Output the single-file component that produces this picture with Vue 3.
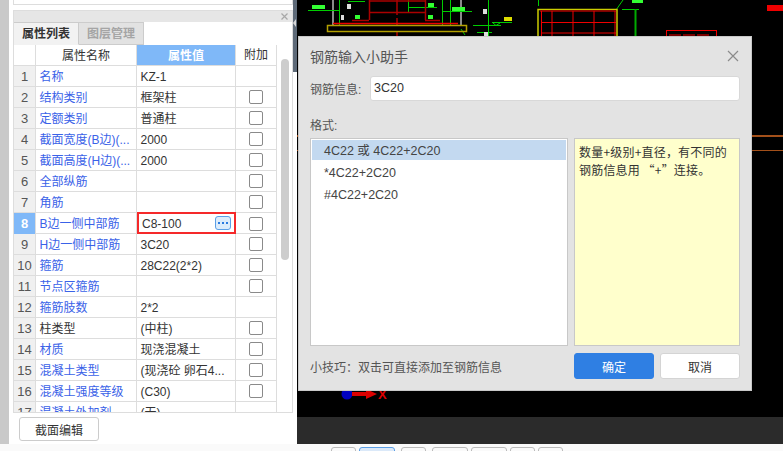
<template>
  <div class="page">
    <aside class="side">
      <div class="rail"></div>
      <div class="side-main">
        <div class="top-box"></div>
        <div class="panel">
          <div class="panel-head">
            <svg class="panel-x" viewBox="0 0 7 7" width="7" height="7">
              <path d="M0.500 0.500L6.500 6.500M6.500 0.500L0.500 6.500" stroke="#a8a8a8" stroke-width="1.200" fill="none" />
            </svg>
          </div>
          <div class="tabs">
            <div class="tab active">属性列表</div>
            <div class="tab">图层管理</div>
          </div>
          <div class="grid-wrap">
            <div class="grid">
              <div class="row head">
                <div class="c-no"></div>
                <div class="c-name center">属性名称</div>
                <div class="c-val center hl">属性值</div>
                <div class="c-add center">附加</div>
              </div>
              <div v-for="(r, i) in rows" :key="i" class="row">
                <div class="c-no" :class="{ hl: r.cur }">{{ i + 1 }}</div>
                <div class="c-name" :class="{ blue: r.blue }">{{ r.name }}</div>
                <div v-if="r.cur" class="c-val editing">
                  <span class="edit-text">{{ r.val }}</span>
                  <span class="more">
                    <i></i><i></i><i></i>
                  </span>
                </div>
                <div v-else class="c-val">{{ r.val }}</div>
                <div class="c-add"><span v-if="r.chk" class="chk"></span></div>
              </div>
            </div>
            <div class="scroll"><div class="thumb"></div></div>
          </div>
        </div>
        <div class="foot">
          <button class="edit-btn">截面编辑</button>
        </div>
      </div>
      <div class="edge">
        <div class="edge-bar"><span class="notch"></span></div>
      </div>
    </aside>

    <main class="work">
      <div class="canvas">
        <svg class="cad" viewBox="0 0 486 417" width="486" height="417">
          <!-- left column section -->
          <path d="M36 0V25M164 0V25" fill="none" stroke="#8a8a8a" stroke-width="2" />
          <g fill="none" stroke="#0c0" stroke-width="1">
            <path d="M11 10.500H42M42.500 0V25M51 1.500H68M111.500 0V12M111 7.500H140" />
            <path d="M145.500 0V25M153.500 0V25M146 11.500H175M164 29L168 35" />
            <path d="M191.500 0V36M176 25.500H204M180 32.500H195M195 22.500H215M196 23L199 25.500L203 23" />
            <path d="M241.500 0V6M319 10L326 0M325 9.500H342" />
          </g>
          <g fill="#3f3">
            <rect x="15" y="5" width="13" height="4" />
            <rect x="155" y="7" width="13" height="4" />
            <rect x="131" y="3" width="6" height="4" />
            <rect x="58" y="15" width="5" height="4" />
            <rect x="131" y="15" width="5" height="4" />
            <rect x="335" y="0" width="11" height="3" />
          </g>
          <path d="M338.500 9V36" stroke="#0a0" stroke-width="2" fill="none" />
          <g fill="none" stroke="#a00" stroke-width="1.500">
            <path d="M72.500 0V20M128.500 0V20M72 1H128M72 12.500H128M55 20.500H72M128 20.500H143" />
            <path d="M100 0V15M100 18V25M100 32V36" />
          </g>
          <path d="M36 23.500H161" stroke="#e00" stroke-width="1.500" fill="none" />
          <rect x="30.500" y="25.500" width="139" height="6" fill="none" stroke="#b3a000" stroke-width="1.500" />
          <g fill="#ddd">
            <rect x="50" y="4" width="4" height="5" />
            <rect x="44" y="15" width="3" height="5" />
            <rect x="186" y="9" width="4" height="5" />
            <rect x="187" y="32" width="4" height="4" />
          </g>
          <rect x="207" y="17" width="8" height="4" fill="#dd0" />
          <!-- middle section -->
          <path d="M241 36V9.500H320V36" fill="none" stroke="#cc0" stroke-width="1.500" />
          <path d="M243 11H319" stroke="#a00" stroke-width="1.500" fill="none" />
          <g fill="none" stroke="#e00" stroke-width="1">
            <path d="M244.500 11V36M255 11V36M276 11V36M297 11V36M318 11V36M244 22.500H319M244 33H319" />
          </g>
          <g fill="none" stroke="#e00" stroke-width="1">
            <rect x="369.500" y="30.500" width="50" height="8" />
            <path d="M372 35H384M386 35H398M400 35H412" />
          </g>
          <rect x="470" y="5" width="16" height="6" fill="#e00" />
          <path d="M0 136H486" stroke="#a3501a" stroke-width="2" fill="none" />
          <path d="M0 150.500H486" stroke="#a3501a" stroke-width="1" fill="none" />
          <!-- origin -->
          <circle cx="50" cy="394" r="5.500" fill="#0000c0" />
          <path d="M55 392H69V389L80 394L69 399V396H55Z" fill="#d00" />
        </svg>
        <span class="axis-x">X</span>
        <div class="dialog">
          <div class="dlg-head">
            <span class="dlg-title">钢筋输入小助手</span>
            <svg class="dlg-close" viewBox="0 0 12 12" width="12" height="12">
              <path d="M1 1L11 11M11 1L1 11" stroke="#8b8b8b" stroke-width="1.200" fill="none" />
            </svg>
          </div>
          <div class="info-row">
            <label>钢筋信息:</label>
            <div class="info-input">3C20</div>
          </div>
          <div class="fmt-label">格式:</div>
          <div class="fmt-body">
            <div class="fmt-list">
              <div v-for="(f, i) in formats" :key="f" class="fmt-item" :class="{ sel: i === 0 }">{{ f }}</div>
            </div>
            <div class="fmt-note" lang="zh-CN">数量+级别+直径，有不同的钢筋信息用&thinsp;“+”连接。</div>
          </div>
          <div class="dlg-foot">
            <span class="tip">小技巧：双击可直接添加至钢筋信息</span>
            <button class="btn primary">确定</button>
            <button class="btn">取消</button>
          </div>
        </div>
      </div>
      <div class="dark-bar"></div>
      <div class="tools">
        <span
          v-for="(t, i) in tools"
          :key="i"
          class="tool"
          :class="{ on: i === 1 }"
          :style="{ width: t.w + 'px', marginLeft: t.gap + 'px' }"
        ></span>
      </div>
    </main>
  </div>
</template>

<script setup>
const rows = [
  { name: '名称', val: 'KZ-1', blue: true },
  { name: '结构类别', val: '框架柱', blue: true, chk: true },
  { name: '定额类别', val: '普通柱', blue: true, chk: true },
  { name: '截面宽度(B边)(...', val: '2000', blue: true, chk: true },
  { name: '截面高度(H边)(...', val: '2000', blue: true, chk: true },
  { name: '全部纵筋', val: '', blue: true, chk: true },
  { name: '角筋', val: '', blue: true, chk: true },
  { name: 'B边一侧中部筋', val: 'C8-100', blue: true, chk: true, cur: true },
  { name: 'H边一侧中部筋', val: '3C20', blue: true, chk: true },
  { name: '箍筋', val: '28C22(2*2)', blue: true, chk: true },
  { name: '节点区箍筋', val: '', blue: true, chk: true },
  { name: '箍筋肢数', val: '2*2', blue: true },
  { name: '柱类型', val: '(中柱)', chk: true },
  { name: '材质', val: '现浇混凝土', blue: true, chk: true },
  { name: '混凝土类型', val: '(现浇砼 卵石4...', blue: true, chk: true },
  { name: '混凝土强度等级', val: '(C30)', blue: true, chk: true },
  { name: '混凝土外加剂', val: '(无)', blue: true }
]

const formats = ['4C22 或 4C22+2C20', '*4C22+2C20', '#4C22+2C20']

const tools = [
  { w: 25, gap: 0 },
  { w: 36, gap: 3 },
  { w: 25, gap: 6 },
  { w: 36, gap: 6 },
  { w: 36, gap: 3 },
  { w: 25, gap: 3 },
  { w: 25, gap: 3 }
]
</script>

<style>
html,
body {
  margin: 0;
  background: #fafafa;
  overflow: hidden;
}
</style>

<style scoped>
.page {
  width: 783px;
  height: 451px;
  display: flex;
  overflow: hidden;
  font-family: "Liberation Sans", "Noto Sans CJK SC", sans-serif;
  font-size: 12px;
  color: #333;
}

.side {
  width: 297px;
  height: 444px;
  flex: none;
  display: flex;
}

.rail {
  width: 9px;
  flex: none;
  background: #c9c9c9;
}

.side-main {
  width: 284px;
  flex: none;
  padding-left: 4px;
  box-sizing: border-box;
  display: flex;
  flex-direction: column;
  background: #fff;
}

.edge {
  width: 4px;
  flex: none;
  background: #fff;
}

.edge-bar {
  height: 72px;
  background: #5e6a78;
  position: relative;
}

.notch {
  position: absolute;
  left: 0;
  top: 19px;
  border-style: solid;
  border-width: 4px 3px 4px 0;
  border-color: transparent #d8d8d8 transparent transparent;
}

.top-box {
  height: 5px;
  border: 1px solid #ddd;
  border-top: 0;
  box-sizing: border-box;
  flex: none;
}

.panel {
  margin-top: 5px;
  flex: 1;
  min-height: 0;
  border: 1px solid #ddd;
  box-sizing: border-box;
  display: flex;
  flex-direction: column;
}

.panel-head {
  height: 11px;
  flex: none;
  background: #e6e6e6;
  position: relative;
}

.panel-x {
  position: absolute;
  right: 4px;
  top: 2px;
}

.tabs {
  display: flex;
  height: 23px;
  flex: none;
  background: #fff;
}

.tab {
  width: 65px;
  box-sizing: border-box;
  text-align: center;
  line-height: 22px;
  font-size: 12px;
  font-weight: 700;
  color: #a5a5a5;
  background: #e2e2e2;
  border: 1px solid #ccc;
  border-left: 0;
}

.tab.active {
  color: #333;
  background: #f2f2f2;
  border-bottom-color: #f2f2f2;
}

.grid-wrap {
  flex: 1;
  min-height: 0;
  display: flex;
  overflow: hidden;
}

.grid {
  width: 263px;
  flex: none;
  border-right: 1px solid #ddd;
  box-sizing: border-box;
}

.row {
  display: grid;
  grid-template-columns: 22px 101px 99px 40px;
  height: 21px;
  box-sizing: border-box;
  border-bottom: 1px solid #ddd;
}

.row > div {
  line-height: 22px;
  white-space: nowrap;
  overflow: hidden;
  box-sizing: border-box;
  border-right: 1px solid #ddd;
  padding-left: 3.500px;
}

.row > div:last-child {
  border-right: 0;
}

.row .c-no {
  background: #f0f0f0;
  padding: 0;
  text-align: center;
  font-size: 13px;
  color: #555;
}

.row.head .c-no {
  background: #fff;
}

.row .center {
  text-align: center;
  padding: 0;
}

.row .hl {
  background: #7fb8f8;
  color: #fff;
  font-weight: 700;
}

.c-name.blue {
  color: #3a62e8;
}

.row .c-add {
  display: flex;
  align-items: center;
  justify-content: center;
  padding: 0;
}

.chk {
  width: 12px;
  height: 12px;
  border: 1px solid #8a8a8a;
  border-radius: 2px;
  background: #fff;
}

.row .editing {
  display: flex;
  align-items: center;
  justify-content: space-between;
  border: 2px solid #f5292a;
  padding: 0 3px 0 3px;
  height: 22px;
  margin-top: -1px;
  position: relative;
  overflow: visible;
}

.edit-text {
  padding-top: 2px;
}

.more {
  width: 14px;
  height: 12px;
  border: 1px solid #5b9fe6;
  border-radius: 3px;
  background: #dcecfb;
  display: flex;
  align-items: center;
  justify-content: center;
  gap: 2px;
}

.more i {
  width: 2px;
  height: 2px;
  background: #2a7be0;
}

.scroll {
  width: 15px;
  flex: none;
  position: relative;
  background: #fff;
}

.thumb {
  position: absolute;
  left: 4px;
  top: 14px;
  width: 8px;
  height: 201px;
  border-radius: 4px;
  background: #cdcdcd;
}

.foot {
  height: 31px;
  flex: none;
  padding-top: 4px;
  box-sizing: border-box;
}

.edit-btn {
  display: block;
  margin-left: 6px;
  width: 80px;
  height: 24px;
  border: 1px solid #ccc;
  border-radius: 3px;
  background: #fff;
  font: 12px "Liberation Sans", "Noto Sans CJK SC", sans-serif;
  color: #333;
  padding: 0;
}

.work {
  flex: 1;
  min-width: 0;
  display: flex;
  flex-direction: column;
}

.canvas {
  height: 417px;
  flex: none;
  background: #000;
  position: relative;
  overflow: hidden;
}

.cad {
  position: absolute;
  left: 0;
  top: 0;
}

.axis-x {
  position: absolute;
  left: 81px;
  top: 387px;
  color: #d00;
  font-size: 13px;
  line-height: 15px;
  font-weight: 700;
}

.dark-bar {
  height: 27px;
  flex: none;
  background: #2b2b2b;
}

.tools {
  flex: 1;
  min-height: 0;
  display: flex;
  padding-left: 34px;
  padding-top: 3px;
}

.tool {
  height: 10px;
  border: 1px solid #bbb;
  border-radius: 3px;
  box-sizing: border-box;
  flex: none;
}

.tool.on {
  background: #dbe9f9;
  border-color: #5b9fe6;
}

.dialog {
  position: absolute;
  left: 1px;
  top: 36px;
  width: 454px;
  height: 355px;
  box-sizing: border-box;
  background: #e3e3e3;
  border: 1px solid #c8c8c8;
  padding: 0 11px 0 11px;
  display: flex;
  flex-direction: column;
}

.dlg-head {
  height: 37px;
  margin-bottom: 1px;
  flex: none;
  display: flex;
  align-items: center;
  justify-content: space-between;
  padding-right: 1px;
}

.dlg-title {
  font-size: 14px;
  color: #555;
}

.dlg-close {
  flex: none;
}

.info-row {
  display: flex;
  align-items: center;
  gap: 8px;
  flex: none;
  height: 25px;
  margin-top: 1px;
}

.info-row label {
  color: #555;
  width: 52px;
}

.info-input {
  flex: 1;
  height: 25px;
  line-height: 23px;
  box-sizing: border-box;
  padding-left: 3px;
  background: #fff;
  border: 1px solid #d8d8d8;
  border-radius: 3px;
  color: #333;
  font-size: 12.500px;
}

.fmt-label {
  margin-top: 17px;
  height: 17px;
  line-height: 17px;
  color: #555;
  flex: none;
}

.fmt-body {
  display: flex;
  gap: 6px;
  margin-top: 3px;
  height: 208px;
  flex: none;
}

.fmt-list {
  width: 258px;
  flex: none;
  box-sizing: border-box;
  background: #fff;
  border: 1px solid #c8c8c8;
  padding: 1px;
}

.fmt-item {
  height: 22px;
  line-height: 24px;
  padding-left: 12px;
  color: #444;
  font-size: 12.500px;
}

.fmt-item.sel {
  background: #c3d9f0;
  height: 20px;
  line-height: 22px;
  margin-bottom: 1px;
}

.fmt-note {
  flex: 1;
  box-sizing: border-box;
  background: #ffffcc;
  border: 1px solid #c8c8c8;
  padding: 4px 4px;
  line-height: 18px;
  letter-spacing: 0.200px;
  color: #333;
  font-family: "Noto Sans CJK SC", sans-serif;
}

.dlg-foot {
  display: flex;
  align-items: center;
  margin-top: 7px;
  gap: 6px;
  flex: none;
}

.tip {
  flex: 1;
  color: #555;
}

.btn {
  width: 80px;
  height: 26px;
  border: 1px solid #d4d4d4;
  border-radius: 3px;
  background: #fff;
  font: 12px "Liberation Sans", "Noto Sans CJK SC", sans-serif;
  color: #333;
  padding: 0;
}

.btn.primary {
  background: #2f7fe3;
  border-color: #2f7fe3;
  color: #fff;
}
</style>
